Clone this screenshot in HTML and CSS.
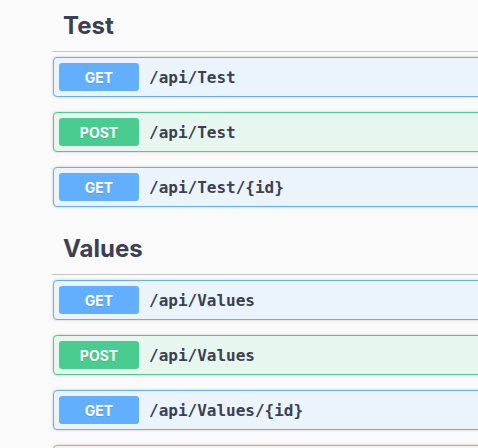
FILE: index.html
```html
<!DOCTYPE html>
<html>
<head>
<meta charset="utf-8">
<link rel="stylesheet" href="styles.css">
</head>
<body>
<div class="page">
  <section class="tag-section">
    <h3 class="tag">Test</h3>
    <div class="opblock get"><span class="method">GET</span><span class="path">/api/Test</span></div>
    <div class="opblock post"><span class="method">POST</span><span class="path">/api/Test</span></div>
    <div class="opblock get"><span class="method">GET</span><span class="path">/api/Test/{id}</span></div>
  </section>
  <section class="tag-section">
    <h3 class="tag">Values</h3>
    <div class="opblock get"><span class="method">GET</span><span class="path">/api/Values</span></div>
    <div class="opblock post"><span class="method">POST</span><span class="path">/api/Values</span></div>
    <div class="opblock get"><span class="method">GET</span><span class="path">/api/Values/{id}</span></div>
    <div class="opblock put"><span class="method">PUT</span><span class="path">/api/Values/{id}</span></div>
  </section>
</div>
</body>
</html>
```
FILE: styles.css
```css
html, body {
  margin: 0;
  padding: 0;
  overflow: hidden;
  background: #fafafa;
}
.page {
  width: 700px;
  padding-left: 52px;
  font-family: Inter, "Liberation Sans", sans-serif;
  color: #3b4151;
}
.tag-section {
  display: flex;
  flex-direction: column;
}
.tag-section + .tag-section {
  margin-top: 1px;
}
.tag {
  margin: 0 0 5px;
  padding: 10px 20px 10px 11px;
  height: 31px;
  line-height: 31px;
  font-size: 24px;
  font-weight: 700;
  color: #3b4151;
  border-bottom: 1px solid #c4c6cb;
}
.opblock {
  margin: 0 0 15px 1px;
  padding: 5px;
  display: flex;
  align-items: center;
  border: 1px solid;
  border-radius: 4px;
  box-shadow: 0 0 3px rgba(0, 0, 0, 0.19);
}
.opblock.get { background: #ebf3fb; border-color: #61affe; }
.opblock.post { background: #e8f6f0; border-color: #49cc90; }
.opblock.put { background: #fbf1e6; border-color: #fca130; }
.method {
  width: 80px;
  height: 28px;
  display: flex;
  align-items: center;
  justify-content: center;
  border-radius: 3px;
  color: #fff;
  font-size: 14px;
  font-weight: 700;
  text-shadow: 0 1px 0 rgba(0, 0, 0, 0.1);
}
.get .method { background: #61affe; }
.post .method { background: #49cc90; }
.put .method { background: #fca130; }
.path {
  padding: 0 10px;
  font-family: "DejaVu Sans Mono", monospace;
  font-size: 16px;
  font-weight: 700;
  color: #3b4151;
}
```
